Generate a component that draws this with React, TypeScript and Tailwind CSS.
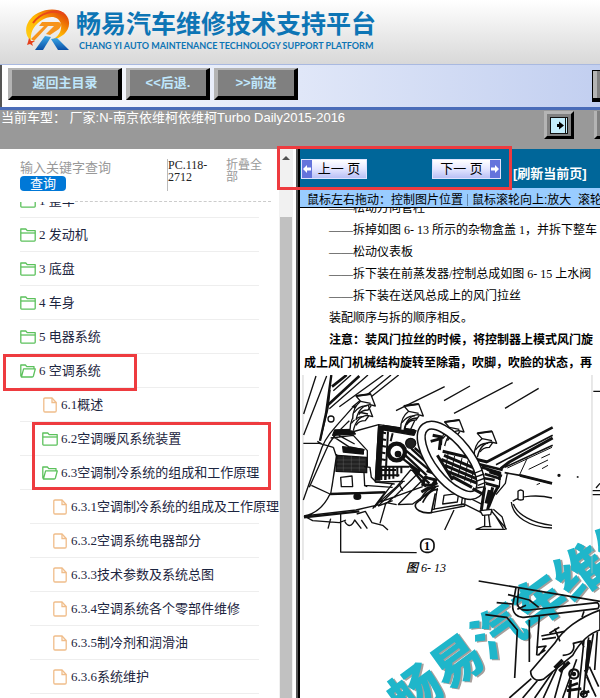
import React from 'react';

type IconKind = 'folder' | 'open' | 'file';

interface TreeItem {
  id: string;
  num: string;
  label: string;
  icon: IconKind;
  level: 1 | 2 | 3;
}

const items: TreeItem[] = [
  { id: '1', num: '1 ', label: '整车', icon: 'folder', level: 1 },
  { id: '2', num: '2 ', label: '发动机', icon: 'folder', level: 1 },
  { id: '3', num: '3 ', label: '底盘', icon: 'folder', level: 1 },
  { id: '4', num: '4 ', label: '车身', icon: 'folder', level: 1 },
  { id: '5', num: '5 ', label: '电器系统', icon: 'folder', level: 1 },
  { id: '6', num: '6 ', label: '空调系统', icon: 'open', level: 1 },
  { id: '61', num: '6.1', label: '概述', icon: 'file', level: 2 },
  { id: '62', num: '6.2', label: '空调暖风系统装置', icon: 'folder', level: 2 },
  { id: '63', num: '6.3', label: '空调制冷系统的组成和工作原理', icon: 'open', level: 2 },
  { id: '631', num: '6.3.1', label: '空调制冷系统的组成及工作原理', icon: 'file', level: 3 },
  { id: '632', num: '6.3.2', label: '空调系统电器部分', icon: 'file', level: 3 },
  { id: '633', num: '6.3.3', label: '技术参数及系统总图', icon: 'file', level: 3 },
  { id: '634', num: '6.3.4', label: '空调系统各个零部件维修', icon: 'file', level: 3 },
  { id: '635', num: '6.3.5', label: '制冷剂和润滑油', icon: 'file', level: 3 },
  { id: '636', num: '6.3.6', label: '系统维护', icon: 'file', level: 3 },
];

const steps = [
  '松动方向管柱',
  '拆掉如图 6- 13 所示的杂物盒盖 1，并拆下整车',
  '松动仪表板',
  '拆下装在前蒸发器/控制总成如图 6- 15 上水阀',
  '拆下装在送风总成上的风门拉丝',
];

const Logo: React.FC = () => (
  <svg viewBox="0 0 46 42" className="h-[42px] w-[46px] shrink-0" aria-hidden="true">
    <defs>
      <linearGradient id="ring" x1="0" y1="1" x2="1" y2="0">
        <stop offset="0" stopColor="#ffd21a" />
        <stop offset="0.5" stopColor="#ffb400" />
        <stop offset="1" stopColor="#d9240c" />
      </linearGradient>
      <linearGradient id="leg" x1="0" y1="0" x2="0" y2="1">
        <stop offset="0" stopColor="#3aa6e6" />
        <stop offset="1" stopColor="#0a4fa6" />
      </linearGradient>
    </defs>
    <path d="M6 32C-3 24 1 10 13 4 27-3 43 1 44 13c1 9-7 16-17 18 7-4 10-9 9-16C34 7 25 6 17 11 9 16 5 23 6 32z" fill="url(#ring)" />
    <path d="M8 14C15 4 29 0 39 5" stroke="#e8481a" strokeWidth="2" fill="none" />
    <path d="M17 13h16c4 0 4 4 1 7l-9 6-4-1 8-8h-6L9 32l-3-2 13-13h-5z" fill="#f7941a" />
    <path d="M20 27l6 1-8 13H10z" fill="url(#leg)" />
    <path d="M26 30l6-1 12 12H33z" fill="url(#leg)" />
    <path d="M4 29l2 3h4l-3 2 1 3-3-2-3 1 1-3z" fill="#e5401c" />
  </svg>
);

const TreeIcon: React.FC<{ kind: IconKind }> = ({ kind }) => {
  if (kind === 'file') {
    return (
      <svg viewBox="0 0 16 16" className="h-4 w-4 shrink-0" fill="none" stroke="#f0bd8a" strokeWidth="1.3">
        <path d="M10 1H3Q1.800 1 1.800 2.200v11.600Q1.800 15 3 15h10q1.200 0 1.200-1.200V5.500z" />
        <path d="M10 1v4.500h4.200" />
      </svg>
    );
  }
  return (
    <svg viewBox="0 0 16 14" className="h-3.5 w-4 shrink-0" fill="none" stroke="#5cc15c" strokeWidth="1.3" strokeLinejoin="round">
      {kind === 'folder' ? (
        <>
          <path d="M.8 12.300V1h5l1.400 1.600h8v9.700q0 .8-.8.8H1.600q-.8 0-.8-.8z" />
          <path d="M.8 5h14.400" />
        </>
      ) : (
        <path d="M.8 12.500V1h4.600l1.400 1.600H14v2.200M1.400 13L3.600 4.900h11.700L13.400 12q-.3 1-1.200 1z" />
      )}
    </svg>
  );
};

const levelRow = { 1: 'ml-5', 2: 'ml-5', 3: 'ml-[30px]' };
const levelPad = { 1: '', 2: 'pl-[22px]', 3: 'pl-[22px]' };

const TreeRow: React.FC<{ item: TreeItem }> = ({ item }) => (
  <li className={`h-[34px] mr-5 border-b border-[#eeeeee] ${levelRow[item.level]}`}>
    <a href="#" className={`flex h-full items-center gap-[3px] whitespace-nowrap text-[13px] text-[#1c2540] ${levelPad[item.level]}`}>
      <TreeIcon kind={item.icon} />
      <span className="whitespace-pre">{item.num}{item.label}</span>
    </a>
  </li>
);

const BevelButton: React.FC<{ children: React.ReactNode; width: string }> = ({ children, width }) => (
  <button
    className={`${width} h-8 border-4 border-t-2 border-t-[#b4b4b4] border-l-[#b4b4b4] border-b-black border-r-black bg-[#808080] text-[13px] leading-4 font-bold text-[#bfe6fb]`}
  >
    {children}
  </button>
);

const VentArrow: React.FC<{ x: number; y: number }> = ({ x, y }) => (
  <g transform={`translate(${x} ${y})`}>
    <path d="M2 76C2 50 10 34 26 22L12 6 56 0 70 36 54 32C34 34 18 50 12 78" fill="#fff" />
    <path d="M26 22l30 6M6 56C18 40 30 34 44 36M20 62C26 52 36 48 48 48L58 34" />
    <path d="M12 6L56 0" strokeWidth="6" />
  </g>
);

const Figure: React.FC = () => (
  <svg viewBox="0 0 300 323" className="h-[323px] w-[300px] shrink-0" role="img" aria-label="图 6-13">
    <g transform="rotate(-36 117 316)" fontSize="51" fontWeight="900">
      <text x="91" y="336" fill="#a79f9c">畅易汽车维修</text>
      <text x="90" y="334" fill="#1fb6ca">畅易汽车维修</text>
    </g>

    {/* dashboard, drawn on a 3x grid */}
    <g transform="translate(-4 -5) scale(0.33333)" fill="none" stroke="#111" strokeWidth="4" strokeLinejoin="round">
      <path d="M21 15V570M888 15V610" stroke="#bbb" strokeWidth="2" />
      {/* windscreen and left pillar */}
      <path d="M60 18L23 132M92 18L23 195M72 212L96 115 102 60" />
      <path d="M106 15L90 130 72 212" strokeWidth="7" />
      <path d="M108 50L152 15M95 106L190 18" strokeWidth="8" />
      <path d="M112 62L165 15M100 116L216 15M130 110L262 15M168 112L285 15M186 112L308 15" />
      <path d="M22 390L78 232C92 196 118 172 170 112M40 352L92 236C104 204 134 178 160 152M22 220H70L112 232M64 214L78 222" />
      <circle cx="105" cy="147" r="9" />
      <path d="M300 122L446 50M444 92L522 48M474 130L650 38M627 115L728 55" />
      {/* glove box */}
      <path d="M104 204L172 196 214 242V290M112 200L158 230 206 240M128 196L176 222M112 232L122 262 104 372M122 252L108 350" />
      <path d="M116 180L168 178 178 192 110 196zM140 230L202 238V252L142 246z" fill="#111" />
      <path d="M124 256L212 262V308L120 304z" fill="#222" />
      <path d="M122 270H208M122 282H208M122 294H208M142 258V304M166 258V304M190 260V304" stroke="#777" strokeWidth="1" />
      <path d="M134 322L168 318 170 350 136 350zM204 308L206 346 290 352M204 290L222 292 226 322 240 336 296 342M204 346L214 350" />
      <path d="M46 346L102 372 268 366M102 372C84 410 56 432 24 438M24 438L180 420 250 404M268 366L230 416M290 340L236 412M320 336L250 404" />
      <path d="M102 372L268 367M24 442L190 424" strokeWidth="7" />
      <ellipse cx="184" cy="380" rx="10" ry="8" fill="#111" />
      <path d="M24 438L50 452 130 458 150 450M104 446L96 476M146 454C158 474 168 468 176 450L196 476M196 450L214 476M182 432L208 424 228 458 260 466 276 480M270 398L252 460M134 432V546L362 548" />
      {/* centre console */}
      <path d="M168 186L248 164 356 180M248 164L238 336 326 334" />
      <path d="M248 168L262 170 252 330 238 330zM262 166L360 182 354 196 264 180z" fill="#111" />
      <path d="M252 186L270 190M250 206L270 210M248 226L270 230M248 246L268 250M248 266L268 270M246 290H340M252 300H300M246 316H310M276 184L268 330M290 190L284 214" strokeWidth="6" />
      <path d="M256 292V330M268 290V330M280 290V328M292 290V326M304 288V320M316 288V310" strokeWidth="6" />
      <circle cx="302" cy="246" r="25" strokeWidth="13" />
      <circle cx="306" cy="252" r="8" fill="#111" />
      <circle cx="344" cy="220" r="15" fill="#222" />
      <path d="M322 250L392 316M330 242L402 302M346 236L412 296M356 234L408 278M320 266L372 306M340 286L400 340M350 300L390 350M396 284L430 330" strokeWidth="7" />
      {/* lower cover */}
      <path d="M232 412L300 352 344 300 370 306 300 376 266 404M308 340L320 362M306 404L376 334 394 318M306 404L350 402 420 352M270 398L302 404M280 386L380 350M250 396L300 380M246 408L290 392" />
      <path d="M360 400C350 418 380 432 406 428L418 370M360 400L418 350M372 392C384 366 404 350 428 348M380 398C396 366 414 356 426 360" strokeWidth="5" />
      <path d="M376 366L424 338M388 322L420 330 408 346 380 344zM392 302L420 312" strokeWidth="9" />
      <path d="M406 428L506 408 508 374M408 418L504 402M424 354L414 420M444 376L488 370 484 396 440 402zM474 420L446 480M508 404L556 428M520 384L560 404M500 376L496 406" />
      {/* dash right of the wheel */}
      <path d="M404 214L434 206 430 240M410 196L440 202M440 244L574 276M444 256L544 298M436 268L540 312M446 286L546 328M454 304L550 342M468 320L528 352M424 256L470 330" strokeWidth="9" />
      <path d="M456 252L448 300M476 258L464 310M498 264L486 322M516 272L506 332M536 280L524 340" strokeWidth="3" />
      <path d="M548 282L620 300M556 292L612 308 610 330M572 298L606 312M580 306L618 318M560 324L596 330M566 312L614 326" strokeWidth="8" />
      {/* right pillar and door */}
      <path d="M572 276L770 172" strokeWidth="8" />
      <path d="M600 284L770 196M626 292L770 226" strokeWidth="5" />
      <path d="M614 296L640 276 770 204" strokeWidth="9" />
      <path d="M634 294L768 232M694 264L670 316M698 298L756 270M736 264L762 252M738 296L756 286M722 344L732 340" strokeWidth="3" />
      <path d="M626 308L672 316 768 340" strokeWidth="5" />
      <path d="M672 316L768 340" strokeWidth="8" />
      <path d="M634 310L628 340 600 374M612 322L610 350 594 370" />
      <path d="M768 384C730 374 674 376 650 394M646 396C650 440 700 472 768 474M652 402C664 434 710 460 768 466" />
      <path d="M666 388V364Q674 356 682 364V388Q674 392 666 388z" fill="#fff" />
      {/* vent arrows */}
      <VentArrow x={160} y={104} />
      <VentArrow x={168} y={72} />
      <VentArrow x={312} y={102} />
      <path d="M326 178C330 156 344 144 364 144M344 178L356 152" />
      <VentArrow x={434} y={150} />
      <VentArrow x={532} y={184} />
      {/* steering wheel */}
      <ellipse cx="465" cy="271" rx="56" ry="126" transform="rotate(-38 465 271)" stroke="#111" strokeWidth="28" />
      <ellipse cx="465" cy="271" rx="56" ry="126" transform="rotate(-38 465 271)" stroke="#fff" strokeWidth="19" />
      <path d="M534 310L560 300M536 322L564 312M540 334L568 324M546 346L572 336M542 354L568 350" />
      {/* column */}
      <path d="M570 340L606 350 590 380 578 410M566 352L556 420M580 360L570 400M590 352L574 424M530 356L560 372" strokeWidth="9" />
      <path d="M552 424L566 430V468L540 478H628M588 420L578 436 582 470M560 470H586M584 420L632 478M592 418L618 440 630 478M600 440L622 476" />
      <path d="M552 422L588 418 584 434 560 436z" fill="#fff" />
      <circle cx="789" cy="316" r="3" fill="#111" />
      <circle cx="845" cy="321" r="1" />
      <path d="M892 64H912M890 362H912M890 374H912M900 354L912 340" />
    </g>

    <g transform="translate(-4 155) scale(0.33333)" fill="none" stroke="#111" strokeWidth="5" strokeLinejoin="round">
      <rect x="374" y="27" width="40" height="40" rx="16" />
      <path d="M548 153L912 214M660 172L650 228C650 250 664 264 684 262L904 236M668 176L664 222C668 240 684 242 700 240L904 218Q914 226 904 238M636 194L700 210 728 232M602 218L650 222M568 254L632 262 664 300 656 444M700 270V396M730 258L722 376M664 238L690 226" />
      <path d="M912 240C850 262 800 300 776 340L704 424C704 444 720 456 742 448L830 376C850 340 880 310 912 300z" fill="#fff" />
      <path d="M864 244L858 262M736 318L806 304M738 328L780 322M776 296L792 334M760 310L790 292M722 352L750 348 728 376M724 376L748 360M800 376C826 376 838 360 832 340L856 334 864 352M706 446L640 504M724 452L680 504M770 426L716 504M788 404L742 504M806 396L776 504M842 388L800 504M864 330L846 504M878 322L862 504M892 312L872 430M904 306L896 420M866 420L890 480M880 410L908 470M872 440L900 500" />
      <path d="M776 414L800 390M790 424L820 396M880 330L872 420" strokeWidth="11" />
      <circle cx="834" cy="432" r="14" strokeWidth="7" />
      <circle cx="834" cy="432" r="4" fill="#111" />
      <path d="M816 470L846 460M812 482L856 476M852 494L880 484M824 450L820 504" strokeWidth="8" />
      <circle cx="864" cy="492" r="9" />
    </g>
    <text x="127" y="175" textAnchor="middle" fontSize="12" fontWeight="700">1</text>
    <text x="106" y="197" fontSize="12" fontStyle="italic" fontWeight="500">图 6- 13</text>
  </svg>
);

const Sidebar: React.FC = () => (
  <aside className="flex w-[296px] shrink-0 bg-white">
    <div className="flex w-[279px] flex-col overflow-hidden font-['Liberation_Serif','Noto_Sans_CJK_SC',serif]">
      <div className="flex h-[52px] shrink-0 items-start pt-2.5 pl-5 text-xs leading-3">
        <form className="w-[147px]">
          <input
            type="text"
            aria-label="输入关键字查询"
            placeholder="输入关键字查询"
            className="block h-4 w-full pt-0.5 text-[13px] leading-4 placeholder:text-[#999999]"
          />
          <button type="button" className="mt-px h-[15px] w-[46px] rounded-[4px] bg-[#0078d7] text-[13px] leading-[15px] text-white">
            查询
          </button>
        </form>
        <span className="h-8 w-[59px] border-l border-[#bbbbbb] pr-4 text-[#222222]">PC.118-2712</span>
        <a href="#" className="w-10 text-[#999999]">折叠全部</a>
      </div>
      <div className="mr-2 ml-[75px] border-t border-dashed border-[#cccccc]" />
      <div className="flex-1 overflow-hidden">
        <ul className="-mt-[18px]">
          {items.map((item) => (
            <TreeRow key={item.id} item={item} />
          ))}
        </ul>
      </div>
    </div>
    <div className="flex w-3.5 flex-col items-center bg-[#f1f1f1]">
      <svg viewBox="0 0 8 4" className="mt-[7px] h-1 w-2 shrink-0" aria-hidden="true">
        <path d="M0 4L4 0l4 4z" fill="#505050" />
      </svg>
      <div className="mt-[57px] w-3 flex-1 bg-[#c1c1c1]" />
    </div>
  </aside>
);

const pagerClass = "flex h-5 items-center border border-[#dfe3ff] bg-linear-to-b from-white via-[#e4e6ff] to-[#b9c0f5] text-[13px] leading-4 text-black";

const PagerArrow: React.FC<{ back?: boolean }> = ({ back }) => (
  <span className="flex h-full w-2.5 items-center justify-center bg-[#6474dc]">
    <svg viewBox="0 0 8 8" className="h-2 w-2" fill="#fff">
      {back ? <path d="M0 4l4-4v2.500h4v3H4V8z" /> : <path d="M8 4L4 0v2.500H0v3h4V8z" />}
    </svg>
  </span>
);

const Viewer: React.FC = () => (
  <main className="flex min-w-0 flex-1 flex-col overflow-hidden border-l-2 border-black bg-white whitespace-nowrap">
    <div className="flex h-[39px] shrink-0 items-center bg-[#006699] pl-px">
      <button className={`${pagerClass} w-[66px] shrink-0`}>
        <PagerArrow back />
        <span className="flex-1">上一 页</span>
      </button>
      <button className={`${pagerClass} ml-[65px] w-[69px] shrink-0`}>
        <span className="flex-1">下一 页</span>
        <PagerArrow />
      </button>
      <a href="#" className="mb-1 ml-3 self-end text-[13px] leading-5 font-bold text-white">[刷新当前页]</a>
    </div>
    <div className="flex h-5 shrink-0 items-center border-b border-black bg-[#99ccff] pt-1 pl-[7px] text-xs text-black">
      <span>鼠标左右拖动：控制图片位置</span>
      <span className="mx-1 h-3 border-l border-[#6688aa]" />
      <span className="whitespace-pre">鼠标滚轮向上:放大  滚轮向下:缩小</span>
    </div>
    <article className="flex-1 overflow-hidden font-['Liberation_Serif','Noto_Sans_CJK_SC',serif] text-black">
      <div className="-mt-[11px] text-xs leading-[22px]">
        {steps.map((step) => (
          <p key={step} className="pl-[29px]">——{step}</p>
        ))}
        <p className="pl-[29px]">装配顺序与拆的顺序相反。</p>
      </div>
      <div className="pl-1 text-xs leading-[23px] font-bold">
        <p className="pl-[25px]">注意：装风门拉丝的时候，将控制器上模式风门旋</p>
        <p>成上风门机械结构旋转至除霜，吹脚，吹脸的状态，再</p>
      </div>
      <Figure />
    </article>
  </main>
);

export default function App() {
  return (
    <div className="relative flex h-screen flex-col overflow-hidden bg-white font-['Liberation_Sans','Noto_Sans_CJK_SC',sans-serif]">
      <header className="flex h-16 shrink-0 items-start bg-linear-to-b from-white to-[#d8d8d8] pt-[9px] pl-[25px] whitespace-nowrap text-[#0d75b5]">
        <Logo />
        <div className="ml-[5px]">
          <h1 className="text-[25px] leading-[31px] font-bold">畅易汽车维修技术支持平台</h1>
          <p className="pl-[3px] font-['Lato',sans-serif] text-[9px] leading-3 font-bold">
            CHANG YI AUTO MAINTENANCE TECHNOLOGY SUPPORT PLATFORM
          </p>
        </div>
      </header>

      <nav className="flex h-[46px] shrink-0 items-start gap-1 overflow-hidden border-t border-b-3 border-t-[#a9b9e0] border-b-[#4a6cb8] bg-linear-to-r from-white to-[#c2cff0] pt-[3px]">
        <div className="-mt-[3px] mr-0.5 h-[43px] w-0.5 shrink-0 bg-[#555555]" />
        <BevelButton width="w-[114px]">返回主目录</BevelButton>
        <BevelButton width="w-[84px]">&lt;&lt;后退.</BevelButton>
        <BevelButton width="w-[84px]">&gt;&gt;前进</BevelButton>
        <button aria-label="更多" className="mt-0.5 ml-auto h-8 w-2 shrink-0 border border-r-0 border-black border-b-4 bg-[#808080]">
          <span className="block h-full w-1 bg-[#b4b4b4]" />
        </button>
      </nav>

      <div className="flex h-[39px] shrink-0 items-start bg-[#999999] pl-px text-[13px] leading-4 text-white">
        <span className="whitespace-nowrap">当前车型： 厂家:N-南京依维柯依维柯Turbo Daily2015-2016</span>
        <button aria-label="切换侧栏" className="mt-px ml-auto flex h-7 w-[30px] items-center justify-center border-3 border-t-[#b4b4b4] border-l-[#b4b4b4] border-b-black border-r-black bg-[#808080]">
          <svg viewBox="0 0 18 17" className="h-[17px] w-[18px]">
            <rect width="18" height="17" fill="#111" />
            <rect x="1" y="1" width="16" height="15" fill="#c4edfb" />
            <path d="M15.500 1v15" stroke="#111" />
            <path d="M7 7h2V4.500l5 4-5 4V10H7z" fill="#000" />
          </svg>
        </button>
        <button aria-label="全屏" className="mt-px ml-5 h-7 w-1.5 border-l-3 border-b-3 border-l-[#b4b4b4] border-b-black bg-[#808080]" />
      </div>

      <div className="flex min-h-0 flex-1">
        <Sidebar />
        <div className="w-0.5 shrink-0 bg-[#555555]" />
        <Viewer />
      </div>

      {/* callouts over the page */}
      <div className="pointer-events-none absolute top-[146px] left-[277px] h-11 w-[235px] border-3 border-[#ee3b3f]" />
      <div className="pointer-events-none absolute top-[354px] left-[3px] h-[37px] w-[134px] border-3 border-[#ee3b3f]" />
      <div className="pointer-events-none absolute top-[422px] left-8 h-[68px] w-[239px] border-3 border-[#ee3b3f]" />
    </div>
  );
}
